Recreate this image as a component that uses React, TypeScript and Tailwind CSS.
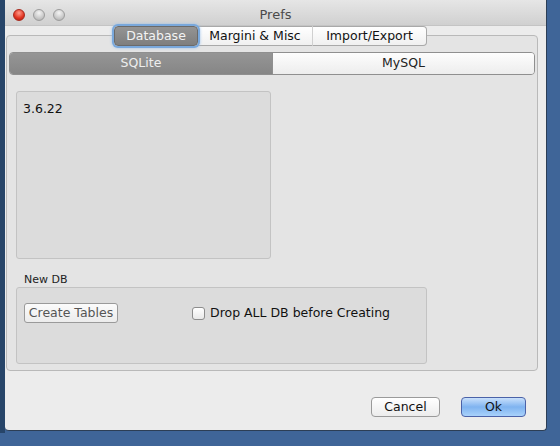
import React from "react";

const font = { fontFamily: '"DejaVu Sans", "Liberation Sans", sans-serif' };

export default function App() {
  return (
    <div className="w-[560px] h-[446px] bg-[#3f6598] overflow-hidden flex items-start" style={font}>
      <div className="w-[5px] h-[433px] bg-[#274569]" />
      <div className="w-[542px] h-[431px] bg-[#ececec] flex flex-col rounded-b-[4px] overflow-hidden border-r border-b border-[#2c3e55]">
        {/* title bar */}
        <div className="h-[26px] relative flex items-center pt-[4px] bg-gradient-to-b from-[#e6e6e6] to-[#d0d0d0] border-b border-[#c4c4c4]">
          <div className="flex items-center gap-[8px] pl-[8px]">
            <div className="w-[12px] h-[12px] rounded-full bg-[radial-gradient(circle_at_50%_30%,#ff9a8a,#e0321f_60%,#a81c10)] border border-[#a8281c]" />
            <div className="w-[12px] h-[12px] rounded-full bg-[radial-gradient(circle_at_50%_30%,#f4f4f4,#c9c9c9_60%,#a9a9a9)] border border-[#9c9c9c]" />
            <div className="w-[12px] h-[12px] rounded-full bg-[radial-gradient(circle_at_50%_30%,#f4f4f4,#c9c9c9_60%,#a9a9a9)] border border-[#9c9c9c]" />
          </div>
          <div className="flex-1 text-center text-[13px] text-[#4a4a4a] pr-[60px] leading-none">Prefs</div>
        </div>
        {/* body */}
        <div className="flex-1 flex flex-col">
          <div className="pt-[9px] pl-[1px] relative">
            <div className="w-[532px] h-[336px] bg-[#e4e4e4] border border-[#b9b9b9] rounded-[4px] flex flex-col relative">
              {/* top tabs over border */}
              <div className="absolute -top-[10px] left-[107px] flex h-[20px] text-[12.5px]">
                <div className="w-[84px] h-[20px] rounded-[4px] bg-gradient-to-b from-[#949494] to-[#7e7e7e] text-[#f3f3f3] flex items-center justify-center shadow-[0_0_0_2px_#79a8dc,0_0_3px_2px_#9cc2ec] border border-[#6a6a6a] relative z-10">
                  Database
                </div>
                <div className="w-[114px] h-[20px] bg-gradient-to-b from-[#ffffff] to-[#f0f0f0] text-[#111] flex items-center justify-center border-y border-[#a9a9a9]">
                  Margini &amp; Misc
                </div>
                <div className="w-[115px] h-[20px] bg-gradient-to-b from-[#ffffff] to-[#f0f0f0] text-[#111] flex items-center justify-center border border-[#a9a9a9] rounded-r-[4px] border-l-[#d0d0d0]">
                  Import/Export
                </div>
              </div>
              {/* inner tabs */}
              <div className="mt-[16px] ml-[2px] w-[526px] h-[23px] flex text-[12.5px] rounded-[4px] border border-[#8f8f8f] overflow-hidden">
                <div className="w-[262px] bg-gradient-to-b from-[#959595] to-[#868686] text-[#eeeeee] flex items-center justify-center">
                  SQLite
                </div>
                <div className="flex-1 bg-gradient-to-b from-[#fdfdfd] to-[#ededed] text-[#222] flex items-center justify-center border-l border-[#8f8f8f]">
                  MySQL
                </div>
              </div>
              {/* version box */}
              <div className="mt-[16px] ml-[9px] w-[255px] h-[168px] bg-[#dcdcdc] border border-[#c3c3c3] rounded-[3px] px-[6px] pt-[11px] text-[12.5px] text-[#111] leading-none">
                3.6.22
              </div>
              <div className="mt-[15px] ml-[17px] text-[11px] text-[#222] leading-[11px]">New DB</div>
              <div className="mt-[2px] ml-[9px] w-[411px] h-[77px] bg-[#dcdcdc] border border-[#c3c3c3] rounded-[3px] flex items-start pt-[15px] pl-[7px]">
                <div className="w-[94px] h-[20px] border border-[#9a9a9a] rounded-[3px] bg-gradient-to-b from-[#fbfbfb] to-[#ececec] text-[12.5px] text-[#555] flex items-center justify-center">
                  Create Tables
                </div>
                <div className="ml-[74px] flex items-center h-[20px] gap-[5px]">
                  <div className="w-[13px] h-[13px] border border-[#8d8d8d] rounded-[3px] bg-gradient-to-b from-[#ffffff] to-[#e9e9e9]" />
                  <span className="text-[12.5px] text-[#111]">Drop ALL DB before Creating</span>
                </div>
              </div>
            </div>
          </div>
          {/* buttons */}
          <div className="mt-[26px] flex justify-end pr-[20px] gap-[21px] text-[12.5px]">
            <div className="w-[69px] h-[20px] border border-[#9a9a9a] rounded-[4px] bg-gradient-to-b from-[#ffffff] to-[#ececec] text-[#111] flex items-center justify-center">
              Cancel
            </div>
            <div className="w-[65px] h-[20px] border border-[#4b62a8] rounded-[4px] bg-gradient-to-b from-[#c9e0fb] via-[#7fb3f0] to-[#a9d2fb] text-[#111] flex items-center justify-center">
              Ok
            </div>
          </div>
        </div>
      </div>
    </div>
  );
}
